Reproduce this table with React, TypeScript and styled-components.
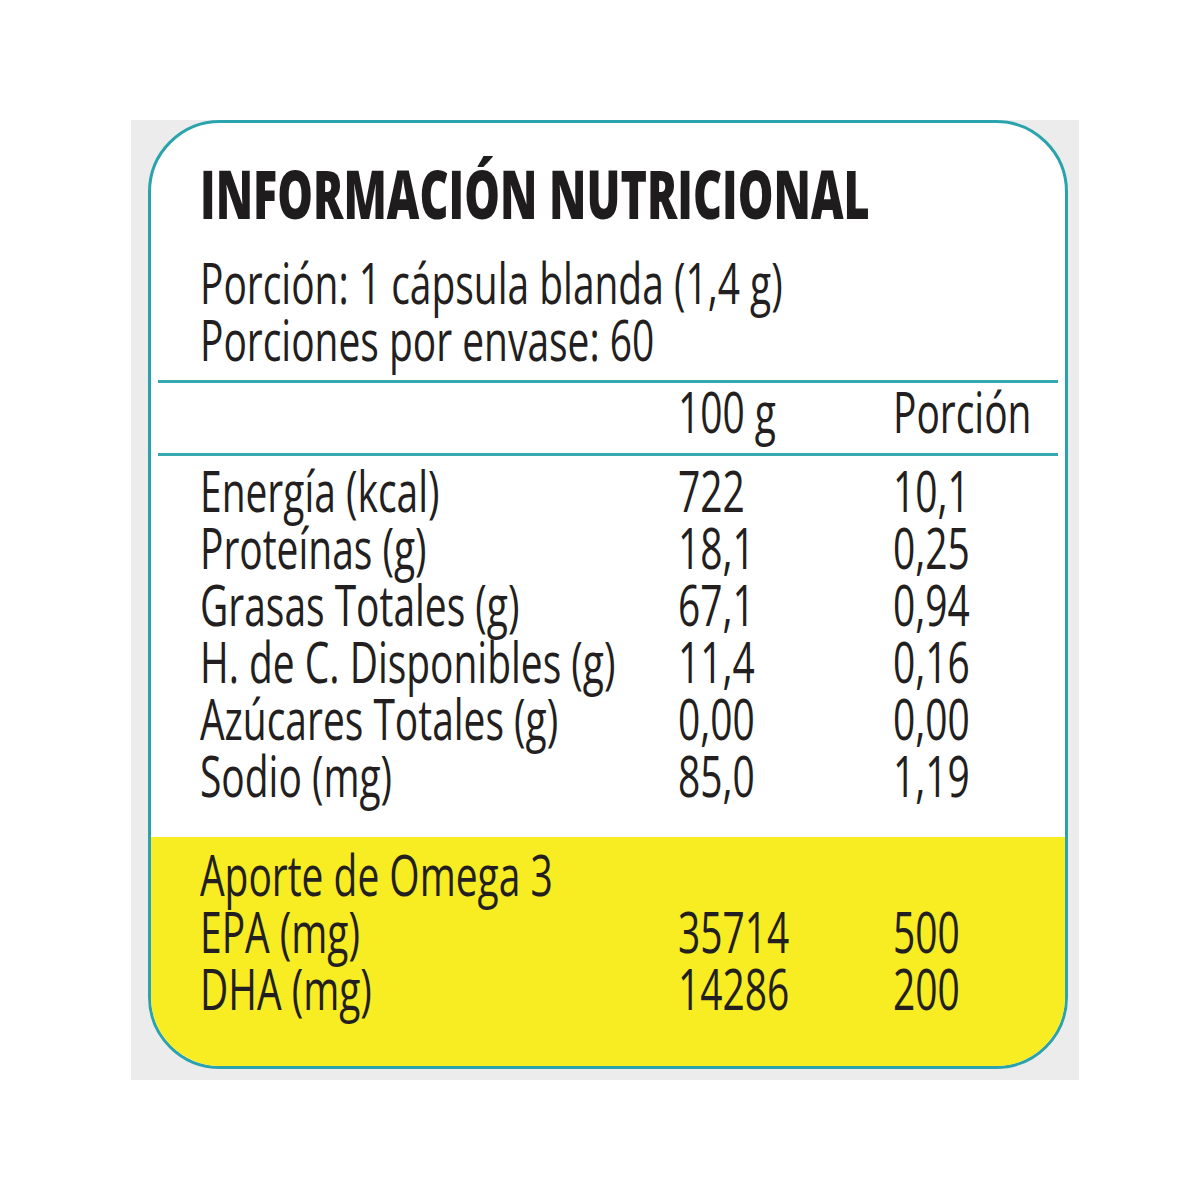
import React from "react";
import styled, { createGlobalStyle } from "styled-components";

const GlobalStyle = createGlobalStyle`
  html, body { margin: 0; padding: 0; background: #ffffff; }
  body { font-family: "Open Sans", "Noto Sans", "DejaVu Sans", sans-serif; color: #231f20; }
`;

const Page = styled.div`
  width: 1200px;
  height: 1200px;
  box-sizing: border-box;
  padding: 120px 0 0 131px;
`;

const Backdrop = styled.div`
  width: 948px;
  height: 960px;
  box-sizing: border-box;
  padding-left: 17px;
  background: #ececec;
`;

const Card = styled.div`
  width: 920px;
  height: 949px;
  box-sizing: border-box;
  border: 3px solid #2aa3ad;
  border-radius: 72px;
  background: #ffffff;
  overflow: hidden;
  display: flex;
  flex-direction: column;
`;

const Top = styled.div`
  padding: 37px 0 0 49px;
`;

const Txt = styled.span<{ $bold?: boolean }>`
  display: inline-block;
  white-space: nowrap;
  transform: scaleX(${(p) => (p.$bold ? 0.67 : 0.695)});
  transform-origin: 0 50%;
  font-weight: ${(p) => (p.$bold ? 800 : 500)};
`;

const Title = styled.div`
  font-size: 67px;
  line-height: 67px;
  color: #1e1c1d;
  margin-bottom: 27px;
`;

const InfoLine = styled.div`
  font-size: 56px;
  line-height: 57px;
`;

const Rule = styled.div`
  height: 3px;
  background: #36a8b1;
  margin: 0 7px;
`;

const FirstRule = styled(Rule)`
  margin-top: 12px;
`;

const Grid = styled.div`
  display: grid;
  grid-template-columns: 478px 215px 1fr;
  padding-left: 49px;
  font-size: 56px;
  line-height: 57px;
`;

const HeaderRow = styled(Grid)`
  height: 70px;
  align-items: start;
`;

const Body = styled(Grid)`
  padding-top: 5.6px;
`;

const Omega = styled(Grid)`
  margin-top: 33px;
  flex: 1;
  align-content: start;
  padding-top: 9px;
  background: #f8ec22;
`;

const Cell = styled.div`
  height: 57px;
`;

type Row = [string, string, string];

const rows: Row[] = [
  ["Energía (kcal)", "722", "10,1"],
  ["Proteínas (g)", "18,1", "0,25"],
  ["Grasas Totales (g)", "67,1", "0,94"],
  ["H. de C. Disponibles (g)", "11,4", "0,16"],
  ["Azúcares Totales (g)", "0,00", "0,00"],
  ["Sodio (mg)", "85,0", "1,19"],
];

const omega: Row[] = [
  ["Aporte de Omega 3", "", ""],
  ["EPA (mg)", "35714", "500"],
  ["DHA (mg)", "14286", "200"],
];

const renderRows = (list: Row[]) =>
  list.map((r) =>
    r.map((c, i) => (
      <Cell key={r[0] + i}>
        <Txt>{c}</Txt>
      </Cell>
    ))
  );

export default function App() {
  return (
    <>
      <GlobalStyle />
      <Page>
        <Backdrop>
          <Card>
            <Top>
              <Title>
                <Txt $bold>INFORMACIÓN NUTRICIONAL</Txt>
              </Title>
              <InfoLine>
                <Txt>Porción: 1 cápsula blanda (1,4 g)</Txt>
              </InfoLine>
              <InfoLine>
                <Txt>Porciones por envase: 60</Txt>
              </InfoLine>
            </Top>
            <FirstRule />
            <HeaderRow>
              <Cell />
              <Cell>
                <Txt>100 g</Txt>
              </Cell>
              <Cell>
                <Txt>Porción</Txt>
              </Cell>
            </HeaderRow>
            <Rule />
            <Body>{renderRows(rows)}</Body>
            <Omega>{renderRows(omega)}</Omega>
          </Card>
        </Backdrop>
      </Page>
    </>
  );
}
